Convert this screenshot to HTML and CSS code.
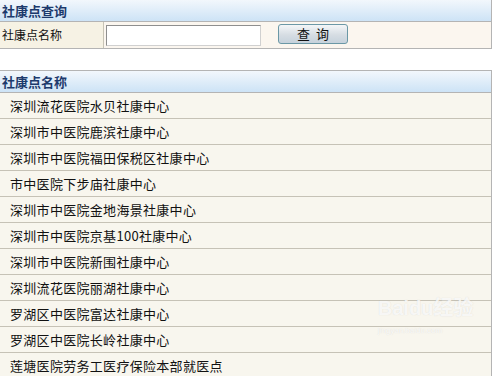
FILE: index.html
```html
<!DOCTYPE html>
<html lang="zh-CN">

<head>
    <meta charset="UTF-8">
    <title>社康点查询</title>
    <link rel="stylesheet" href="styles.css">
</head>

<body>
    <div class="box">
        <div class="box-title">社康点查询</div>
        <div class="search-row">
            <div class="search-label">社康点名称</div>
            <div class="search-field">
                <input class="search-input" type="text">
                <button class="search-btn">查&nbsp;&nbsp;询</button>
            </div>
        </div>
    </div>

    <div class="box list-box">
        <div class="box-title">社康点名称</div>
        <ul class="list">
            <li>深圳流花医院水贝社康中心</li>
            <li>深圳市中医院鹿滨社康中心</li>
            <li>深圳市中医院福田保税区社康中心</li>
            <li>市中医院下步庙社康中心</li>
            <li>深圳市中医院金地海景社康中心</li>
            <li>深圳市中医院京基100社康中心</li>
            <li>深圳市中医院新围社康中心</li>
            <li>深圳流花医院丽湖社康中心</li>
            <li>罗湖区中医院富达社康中心</li>
            <li>罗湖区中医院长岭社康中心</li>
            <li>莲塘医院劳务工医疗保险本部就医点</li>
        </ul>
        <div class="mark">Bai<span class="mark-du">du</span>经验<br><small>jingyan.baidu.com</small></div>
    </div>
</body>

</html>
```

FILE: styles.css
```css
* {
    margin: 0;
    padding: 0;
    box-sizing: border-box;
}

body {
    font-family: "Noto Sans CJK SC", "Liberation Sans", sans-serif;
    background: #fff;
    color: #111;
}

ul {
    list-style: none;
}

.box {
    width: 492px;
    border-right: 1px solid #b4b4b4;
}

.box-title {
    height: 22px;
    line-height: 21px;
    padding-left: 2px;
    font-size: 13px;
    font-weight: bold;
    color: #1d3a6c;
    background: linear-gradient(#f2f7fc, #cde3f6);
    border-bottom: 1px solid #b4b4b4;
}

.search-row {
    display: flex;
    height: 27px;
    border-bottom: 1px solid #b4b4b4;
}

.search-label {
    width: 104px;
    padding-left: 2px;
    font-size: 12px;
    line-height: 25px;
    background: #f6f2e4;
    border-right: 1px solid #c8c4b6;
}

.search-field {
    flex: 1;
    display: flex;
    align-items: center;
    background: #fbf6ef;
    padding-left: 2px;
}

.search-input {
    width: 155px;
    height: 21px;
    border: 1px solid #8e8e8e;
    border-right-color: #d0d0d0;
    border-bottom-color: #d0d0d0;
    background: #fff;
}

.search-btn {
    margin-left: 17px;
    margin-top: -2px;
    width: 70px;
    height: 20px;
    border: 1px solid #6b98a6;
    border-radius: 3px;
    background: linear-gradient(#f4f6f8, #d6dde3 55%, #c6d2dc);
    font-family: "Noto Sans CJK SC", sans-serif;
    font-size: 13px;
    line-height: 16px;
    color: #111;
}

.list-box {
    position: relative;
    margin-top: 21px;
    border-top: 1px solid #b4b4b4;
}

.list li {
    height: 26px;
    line-height: 25px;
    padding-left: 10px;
    font-size: 13px;
    letter-spacing: 0.3px;
    background: #f8f6ee;
    border-bottom: 1px solid #c6c2b6;
}

.mark {
    position: absolute;
    left: 378px;
    top: 228px;
    font-family: "Liberation Sans", "Noto Sans CJK SC", sans-serif;
    font-size: 20px;
    font-weight: bold;
    line-height: 18px;
    color: rgba(255, 255, 255, 0.8);
    text-shadow: 0 0 1px rgba(150, 150, 150, 0.3);
}

.mark small {
    font-size: 8px;
    font-weight: normal;
}
```
